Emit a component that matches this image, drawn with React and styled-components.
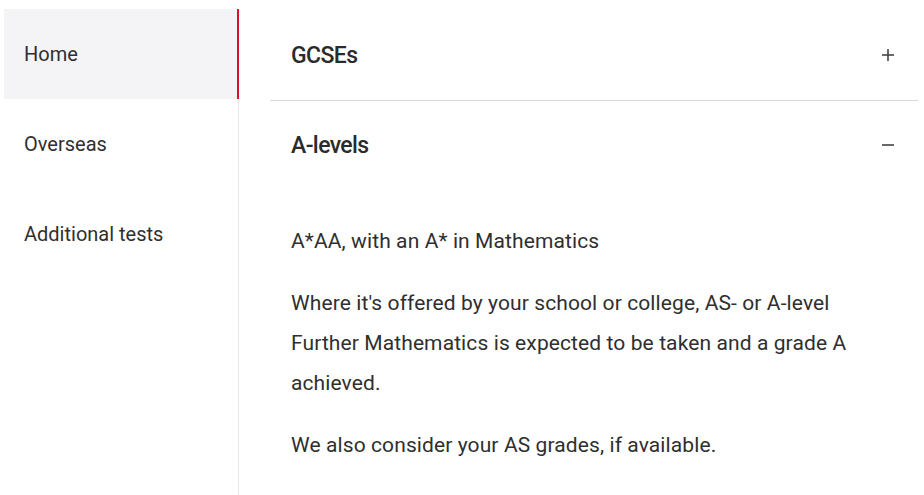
import styled, { createGlobalStyle } from "styled-components";

const GlobalStyle = createGlobalStyle`
  body {
    margin: 0;
    background: #fff;
    font-family: Roboto, "Liberation Sans", Arial, sans-serif;
    color: #2f2f2f;
  }
`;

const Page = styled.div`
  display: flex;
  padding: 9px 6px 0 4px;
  min-height: 495px;
  box-sizing: border-box;
`;

const Sidebar = styled.nav`
  width: 234px;
  flex-shrink: 0;
  border-right: 1px solid #e8e8ea;
  display: flex;
  flex-direction: column;
`;

const NavItem = styled.a`
  display: flex;
  align-items: center;
  height: 90px;
  padding-left: 20px;
  margin-right: ${(p) => (p.$active ? "-1px" : "0")};
  font-size: 20px;
  color: #2f2f2f;
  text-decoration: none;
  background: ${(p) => (p.$active ? "#f4f4f6" : "transparent")};
  border-right: 2px solid ${(p) => (p.$active ? "#dc0f2d" : "transparent")};
  box-sizing: border-box;
`;

const Main = styled.main`
  flex: 1;
  margin-left: 31px;
  padding-top: 1px;
`;

const Section = styled.section`
  border-bottom: ${(p) => (p.$last ? "none" : "1px solid #d9d9d9")};
`;

const Header = styled.button`
  all: unset;
  box-sizing: border-box;
  width: 100%;
  height: ${(p) => p.$height || 90}px;
  display: flex;
  align-items: center;
  justify-content: space-between;
  padding: 0 24px 0 21px;
  cursor: pointer;
`;

const Title = styled.h2`
  margin: 0;
  font-size: 23px;
  font-weight: 500;
  letter-spacing: -0.6px;
  color: #2b2b2b;
`;

const Body = styled.div`
  padding: 10px 21px 0;
`;

const Para = styled.p`
  margin: 22px 0;
  font-size: 21px;
  line-height: 40px;
  letter-spacing: 0.1px;
  color: #2f2f2f;
  max-width: 580px;
`;

const Toggle = ({ open }) => (
  <svg width="12" height="12" viewBox="0 0 12 12">
    <path d="M0 6h12" stroke="#444" strokeWidth="1.6" />
    {!open && <path d="M6 0v12" stroke="#444" strokeWidth="1.6" />}
  </svg>
);

const navItems = ["Home", "Overseas", "Additional tests"];

export default function App() {
  return (
    <>
      <GlobalStyle />
      <Page>
        <Sidebar>
          {navItems.map((item, i) => (
            <NavItem key={item} href="#" $active={i === 0}>
              {item}
            </NavItem>
          ))}
        </Sidebar>
        <Main>
          <Section>
            <Header>
              <Title>GCSEs</Title>
              <Toggle />
            </Header>
          </Section>
          <Section $last>
            <Header $height={88}>
              <Title>A-levels</Title>
              <Toggle open />
            </Header>
            <Body>
              <Para>A*AA, with an A* in Mathematics</Para>
              <Para>
                Where it's offered by your school or college, AS- or A-level
                Further Mathematics is expected to be taken and a grade A
                achieved.
              </Para>
              <Para>We also consider your AS grades, if available.</Para>
            </Body>
          </Section>
        </Main>
      </Page>
    </>
  );
}
